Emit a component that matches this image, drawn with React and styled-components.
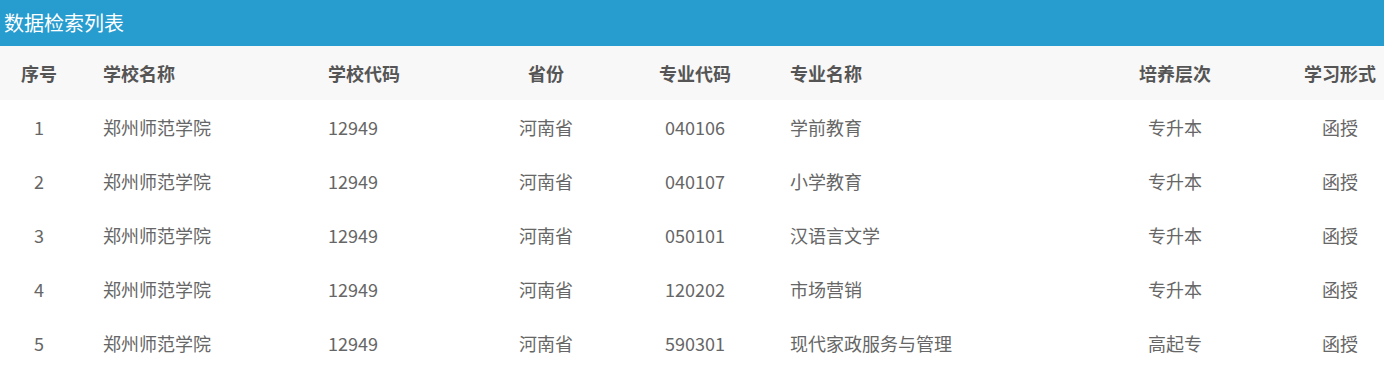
import React from "react";
import styled, { createGlobalStyle } from "styled-components";

const GlobalStyle = createGlobalStyle`
  body {
    margin: 0;
    background: #fff;
    font-family: "Noto Sans CJK SC", "Noto Sans", sans-serif;
  }
`;

const columns = [
  { key: "no", title: "序号", width: 78, align: "center" },
  { key: "school", title: "学校名称", width: 242, align: "left", pad: 25 },
  { key: "code", title: "学校代码", width: 150, align: "left", pad: 8 },
  { key: "prov", title: "省份", width: 152, align: "center" },
  { key: "major", title: "专业代码", width: 146, align: "center" },
  { key: "majorName", title: "专业名称", width: 330, align: "left", pad: 22 },
  { key: "level", title: "培养层次", width: 154, align: "center" },
  { key: "form", title: "学习形式", width: 132, align: "center", pad: 44 },
];

const rows = [
  ["1", "郑州师范学院", "12949", "河南省", "040106", "学前教育", "专升本", "函授"],
  ["2", "郑州师范学院", "12949", "河南省", "040107", "小学教育", "专升本", "函授"],
  ["3", "郑州师范学院", "12949", "河南省", "050101", "汉语言文学", "专升本", "函授"],
  ["4", "郑州师范学院", "12949", "河南省", "120202", "市场营销", "专升本", "函授"],
  ["5", "郑州师范学院", "12949", "河南省", "590301", "现代家政服务与管理", "高起专", "函授"],
];

const App = () => (
  <Panel>
    <GlobalStyle />
    <TitleBar>数据检索列表</TitleBar>
    <Table>
      <HeadRow>
        {columns.map((c) => (
          <Cell key={c.key} $w={c.width} $align={c.align} $pad={c.pad} $head>
            {c.title}
          </Cell>
        ))}
      </HeadRow>
      {rows.map((r) => (
        <Row key={r[0]}>
          {columns.map((c, i) => (
            <Cell key={c.key} $w={c.width} $align={c.align} $pad={c.pad}>
              {r[i]}
            </Cell>
          ))}
        </Row>
      ))}
    </Table>
  </Panel>
);
export default App;

const Panel = styled.div`
  width: 1384px;
`;
const TitleBar = styled.div`
  height: 46px;
  background: #279ccf;
  color: #fff;
  font-size: 20px;
  line-height: 46px;
  padding-left: 4px;
`;
const Table = styled.div`
  display: flex;
  flex-direction: column;
`;
const Row = styled.div`
  display: flex;
  height: 54px;
  align-items: center;
  background: #fff;
`;
const HeadRow = styled(Row)`
  background: #f8f8f8;
`;
const Cell = styled.div`
  box-sizing: border-box;
  width: ${(p) => p.$w}px;
  flex: none;
  text-align: ${(p) => p.$align};
  padding-left: ${(p) => p.$pad || 0}px;
  font-size: 18px;
  font-weight: ${(p) => (p.$head ? 700 : 400)};
  color: ${(p) => (p.$head ? "#555" : "#666")};
  white-space: nowrap;
`;
